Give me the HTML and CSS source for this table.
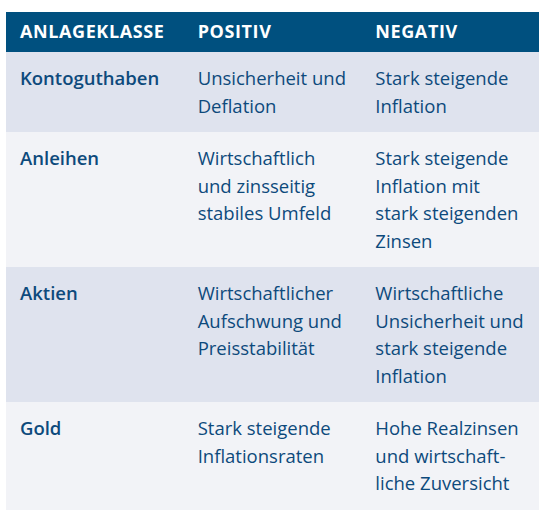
FILE: index.html
```html
<!DOCTYPE html>
<html lang="de">
<head>
<meta charset="utf-8">
<link rel="stylesheet" href="styles.css">
</head>
<body>
<table class="tbl">
  <thead>
    <tr><th>Anlageklasse</th><th>Positiv</th><th>Negativ</th></tr>
  </thead>
  <tbody>
    <tr class="odd"><td class="name">Kontoguthaben</td><td>Unsicherheit und<br>Deflation</td><td>Stark steigende<br>Inflation</td></tr>
    <tr class="even"><td class="name">Anleihen</td><td>Wirtschaftlich<br>und zinsseitig<br>stabiles Umfeld</td><td>Stark steigende<br>Inflation mit<br>stark steigenden<br>Zinsen</td></tr>
    <tr class="odd"><td class="name">Aktien</td><td>Wirtschaftlicher<br>Aufschwung und<br>Preisstabilität</td><td>Wirtschaftliche<br>Unsicherheit und<br>stark steigende<br>Inflation</td></tr>
    <tr class="even"><td class="name">Gold</td><td>Stark steigende<br>Inflationsraten</td><td>Hohe Realzinsen<br>und wirtschaft-<br>liche Zuversicht</td></tr>
  </tbody>
</table>
</body>
</html>
```
FILE: styles.css
```css
html, body { margin: 0; padding: 0; background: #fff; }
body { padding: 12px 10px 0 6px; font-family: "Open Sans", "Noto Sans", sans-serif; }
.tbl {
  border-collapse: collapse;
  width: 533px;
  table-layout: fixed;
  color: #0d4a7c;
  font-size: 18.5px;
  line-height: 27.5px;
  white-space: nowrap;
}
.tbl th {
  background: #00507f;
  color: #fff;
  text-transform: uppercase;
  font-weight: 700;
  font-size: 18px;
  letter-spacing: 0.6px;
  text-align: left;
  padding: 6px 14px 6px;
  height: 28px;
  vertical-align: middle;
}
.tbl td {
  padding: 12px 14px 13px;
  vertical-align: top;
}
.tbl .name { font-weight: 600; }
.odd td { background: #dfe3ee; }
.even td { background: #f2f3f7; }
```
